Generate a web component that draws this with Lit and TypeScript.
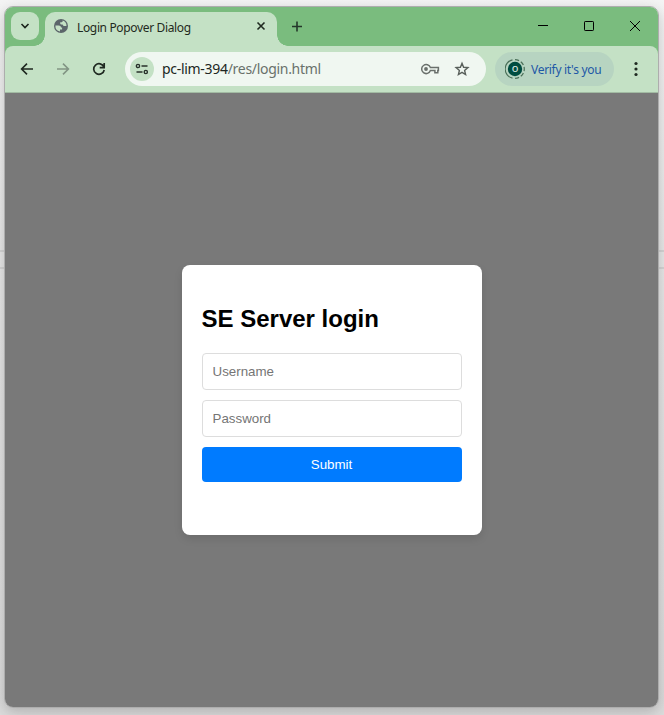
import { LitElement, html, css } from "lit";
import { customElement } from "lit/decorators.js";

@customElement("browser-tabs")
class BrowserTabs extends LitElement {
  static styles = css`
    :host { display: flex; height: 39px; background: #7abc7e; color: #1f2a20; font-family: "Noto Sans", sans-serif; }
    svg { display: block; flex: none; }
    .search { width: 28px; height: 28px; margin: 5px 6px 0; border-radius: 9px; background: #c4e1c5; display: flex; align-items: center; justify-content: center; }
    .tab { position: relative; box-sizing: border-box; width: 232px; height: 34px; margin-top: 5px; padding: 0 9px; border-radius: 10px 10px 0 0; background: #c4e1c5; display: flex; align-items: center; }
    .tab::before, .tab::after { content: ""; position: absolute; bottom: 0; width: 11px; height: 11px; }
    .tab::before { left: -11px; background: radial-gradient(circle at 0 0, transparent 10.5px, #c4e1c5 11px); }
    .tab::after { right: -11px; background: radial-gradient(circle at 100% 0, transparent 10.5px, #c4e1c5 11px); }
    .title { flex: 1; margin-left: 9px; margin-top: -4px; font-size: 12px; letter-spacing: -0.35px; white-space: nowrap; }
    .globe { margin-top: -6px; }
    .close { margin-top: -6px; }
    .plus { margin: 14px 0 0 14px; }
    .controls { margin-left: auto; display: flex; gap: 36px; padding: 14px 18px 0 0; }
  `;
  render() {
    return html`
      <div class="search"><svg width="10" height="8" viewBox="0 0 10 8" fill="none" stroke="#1b241c" stroke-width="1.6"><path d="M1.5 2 5 5.5 8.5 2"/></svg></div>
      <div class="tab">
        <svg class="globe" width="14" height="14" viewBox="0 0 14 14"><circle cx="7" cy="7" r="7" fill="#5b656a"/><path d="M1.4 6.5H4.6c1.5 0 2.4.8 2.4 2.1h1.1v1.9H6v1.9A5.6 5.6 0 0 1 1.4 6.5ZM8.6 1.6v.7c0 .7-.5 1-1.2 1H6.2v1.3c0 .5.3.8.8.8h1.6c.4.9 1 1.6 2.1 1.6h1.8a5.5 5.5 0 0 0-3.9-5.4Z" fill="#c4e1c5"/></svg>
        <span class="title">Login Popover Dialog</span>
        <svg class="close" width="14" height="14" viewBox="0 0 14 14" fill="none" stroke="#1f2a20" stroke-width="1.6"><path d="m3.5 3.5 7 7m0-7-7 7"/></svg>
      </div>
      <svg class="plus" width="12" height="12" viewBox="0 0 12 12" stroke="#24372a" stroke-width="1.6"><path d="M1 5.5h10M6 .5v10"/></svg>
      <div class="controls">
        <svg width="10" height="11" viewBox="0 0 10 11" stroke="#000"><path d="M0 4.5h10"/></svg>
        <svg width="10" height="11" viewBox="0 0 10 11" fill="none" stroke="#000"><rect x=".5" y=".5" width="9" height="9" rx=".7"/></svg>
        <svg width="10" height="11" viewBox="0 0 10 11" stroke="#000"><path d="m0 0 10 10M10 0 0 10"/></svg>
      </div>`;
  }
}

@customElement("browser-toolbar")
class BrowserToolbar extends LitElement {
  static styles = css`
    :host { display: block; background: linear-gradient(#7abc7e 12px, #c4e1c5 12px); font-family: "Noto Sans", sans-serif; }
    svg { display: block; flex: none; }
    .bar { display: flex; align-items: center; box-sizing: border-box; height: 47px; background: #c4e1c5; border-radius: 8px 8px 0 0; border-bottom: 1px solid #a2bba3; padding: 0 14px; }
    .nav { margin-right: 20px; }
    .address { display: flex; align-items: center; width: 361px; height: 34px; border-radius: 17px; background: #f0f7f1; box-sizing: border-box; padding: 0 15px 0 5px; margin-left: -2px; }
    .site { width: 24px; height: 24px; border-radius: 12px; background: #c4e1c5; display: flex; align-items: center; justify-content: center; margin-right: 8px; }
    .url { flex: 1; font-size: 14px; line-height: 20px; letter-spacing: -0.3px; color: #202622; white-space: nowrap; }
    .path { color: #69716b; }
    .key { margin-right: 13px; }
    .profile { display: flex; align-items: center; width: 119px; height: 34px; box-sizing: border-box; padding-left: 10px; margin-left: 9px; border-radius: 17px; background: #b7d4c1; color: #1e58a6; font-size: 12px; letter-spacing: -.3px; white-space: nowrap; }
    .avatar { margin-right: 6px; font-family: "Noto Sans", sans-serif; letter-spacing: 0; }
    .more { margin-left: 20px; }
  `;
  render() {
    return html`<div class="bar">
      <svg class="nav" width="16" height="16" viewBox="0 0 16 16" fill="none" stroke="#1f2921" stroke-width="1.6"><path d="M14 8H3M8 2.6 2.6 8 8 13.4"/></svg>
      <svg class="nav" width="16" height="16" viewBox="0 0 16 16" fill="none" stroke="#829584" stroke-width="1.6"><path d="M2 8h11M8 2.6 13.4 8 8 13.4"/></svg>
      <svg class="nav" width="16" height="16" viewBox="0 0 16 16" fill="none" stroke="#1f2921" stroke-width="1.7"><path d="M12.9 6A5.3 5.3 0 1 0 13.2 9M13.2 2v4.6H8.7"/></svg>
      <div class="address">
        <div class="site"><svg width="14" height="12" viewBox="0 0 14 12" fill="none" stroke="#27302a" stroke-width="1.4"><circle cx="3" cy="3" r="1.6"/><path d="M6.5 3H12.5M1.5 9h6"/><circle cx="10.8" cy="9" r="1.6"/></svg></div>
        <span class="url">pc-lim-394<span class="path">/res/login.html</span></span>
        <svg class="key" width="20" height="12" viewBox="0 0 20 12" fill="none" stroke="#6a706c" stroke-width="1.5"><path d="M10.4 4.6h8v3h-.6v2.2h-2.9V7.6h-4.5a4.5 4.5 0 1 1 0-3Z"/><circle cx="6" cy="6" r="1.9" fill="#6a706c" stroke="none"/></svg>
        <svg width="18" height="18" viewBox="0 0 18 18" fill="none" stroke="#59605b" stroke-width="1.4"><path d="m9 3.3 1.6 4 4.3.3-3.3 2.8 1 4.2L9 12.4l-3.6 2.2 1-4.2-3.3-2.8 4.3-.3Z"/></svg>
      </div>
      <div class="profile">
        <svg class="avatar" width="20" height="20" viewBox="0 0 20 20"><path d="M7.5 .9A9.3 9.3 0 0 0 7.5 19.1" fill="none" stroke="#4b7059" stroke-width="1.2"/><path d="M10 .7a9.3 9.3 0 0 1 0 18.6" fill="none" stroke="#4b7059" stroke-width="1.2" stroke-dasharray="4.2 2"/><circle cx="10" cy="10" r="7.2" fill="#004d40"/><text x="10" y="13.4" font-size="11" text-anchor="middle" fill="#e0ece7">o</text></svg>
        <span>Verify it's you</span>
      </div>
      <svg class="more" width="4" height="16" viewBox="0 0 4 16" fill="#1f2921"><circle cx="2" cy="2.5" r="1.6"/><circle cx="2" cy="8" r="1.6"/><circle cx="2" cy="13.5" r="1.6"/></svg>
    </div>`;
  }
}

@customElement("login-dialog")
class LoginDialog extends LitElement {
  static styles = css`
    :host { display: block; box-sizing: border-box; width: 300px; height: 270px; padding: 20px; background: #fff; border-radius: 8px; box-shadow: 0 4px 8px rgba(0,0,0,.1); font-family: "Liberation Sans", Arial, sans-serif; }
    h2 { margin: 20px 0; font-size: 24px; line-height: 28px; color: #000; }
    input, button { display: block; box-sizing: border-box; width: 260px; border-radius: 4px; font: 13.333px "Liberation Sans", Arial, sans-serif; margin: 0 0 10px; }
    input { height: 37px; padding: 10px; border: 1px solid #ddd; background: #fff; }
    input::placeholder { color: #757575; }
    button { height: 35px; border: 0; background: #007bff; color: #fff; }
  `;
  render() {
    return html`<h2>SE Server login</h2>
      <input type="text" placeholder="Username">
      <input type="password" placeholder="Password">
      <button>Submit</button>`;
  }
}

@customElement("app-root")
class AppRoot extends LitElement {
  static styles = css`
    :host { display: block; box-sizing: border-box; width: 664px; height: 715px; padding: 6px 5px 7px 4px; overflow: hidden; background: linear-gradient(transparent 250px, #d5d5d5 250px 252px, transparent 252px 267px, #d5d5d5 267px 269px, transparent 269px), linear-gradient(#f4f4f4, #e8e8e8 250px, #dcdcdc); }
    .window { box-sizing: border-box; width: 655px; height: 702px; border: 1px solid #adadad; border-radius: 9px; overflow: hidden; display: flex; flex-direction: column; box-shadow: 0 4px 14px rgba(0,0,0,.2); }
    .page { flex: 1; background: #797979; display: flex; align-items: center; justify-content: center; }
  `;
  render() {
    return html`<div class="window">
      <browser-tabs></browser-tabs>
      <browser-toolbar></browser-toolbar>
      <div class="page"><login-dialog></login-dialog></div>
    </div>`;
  }
}
